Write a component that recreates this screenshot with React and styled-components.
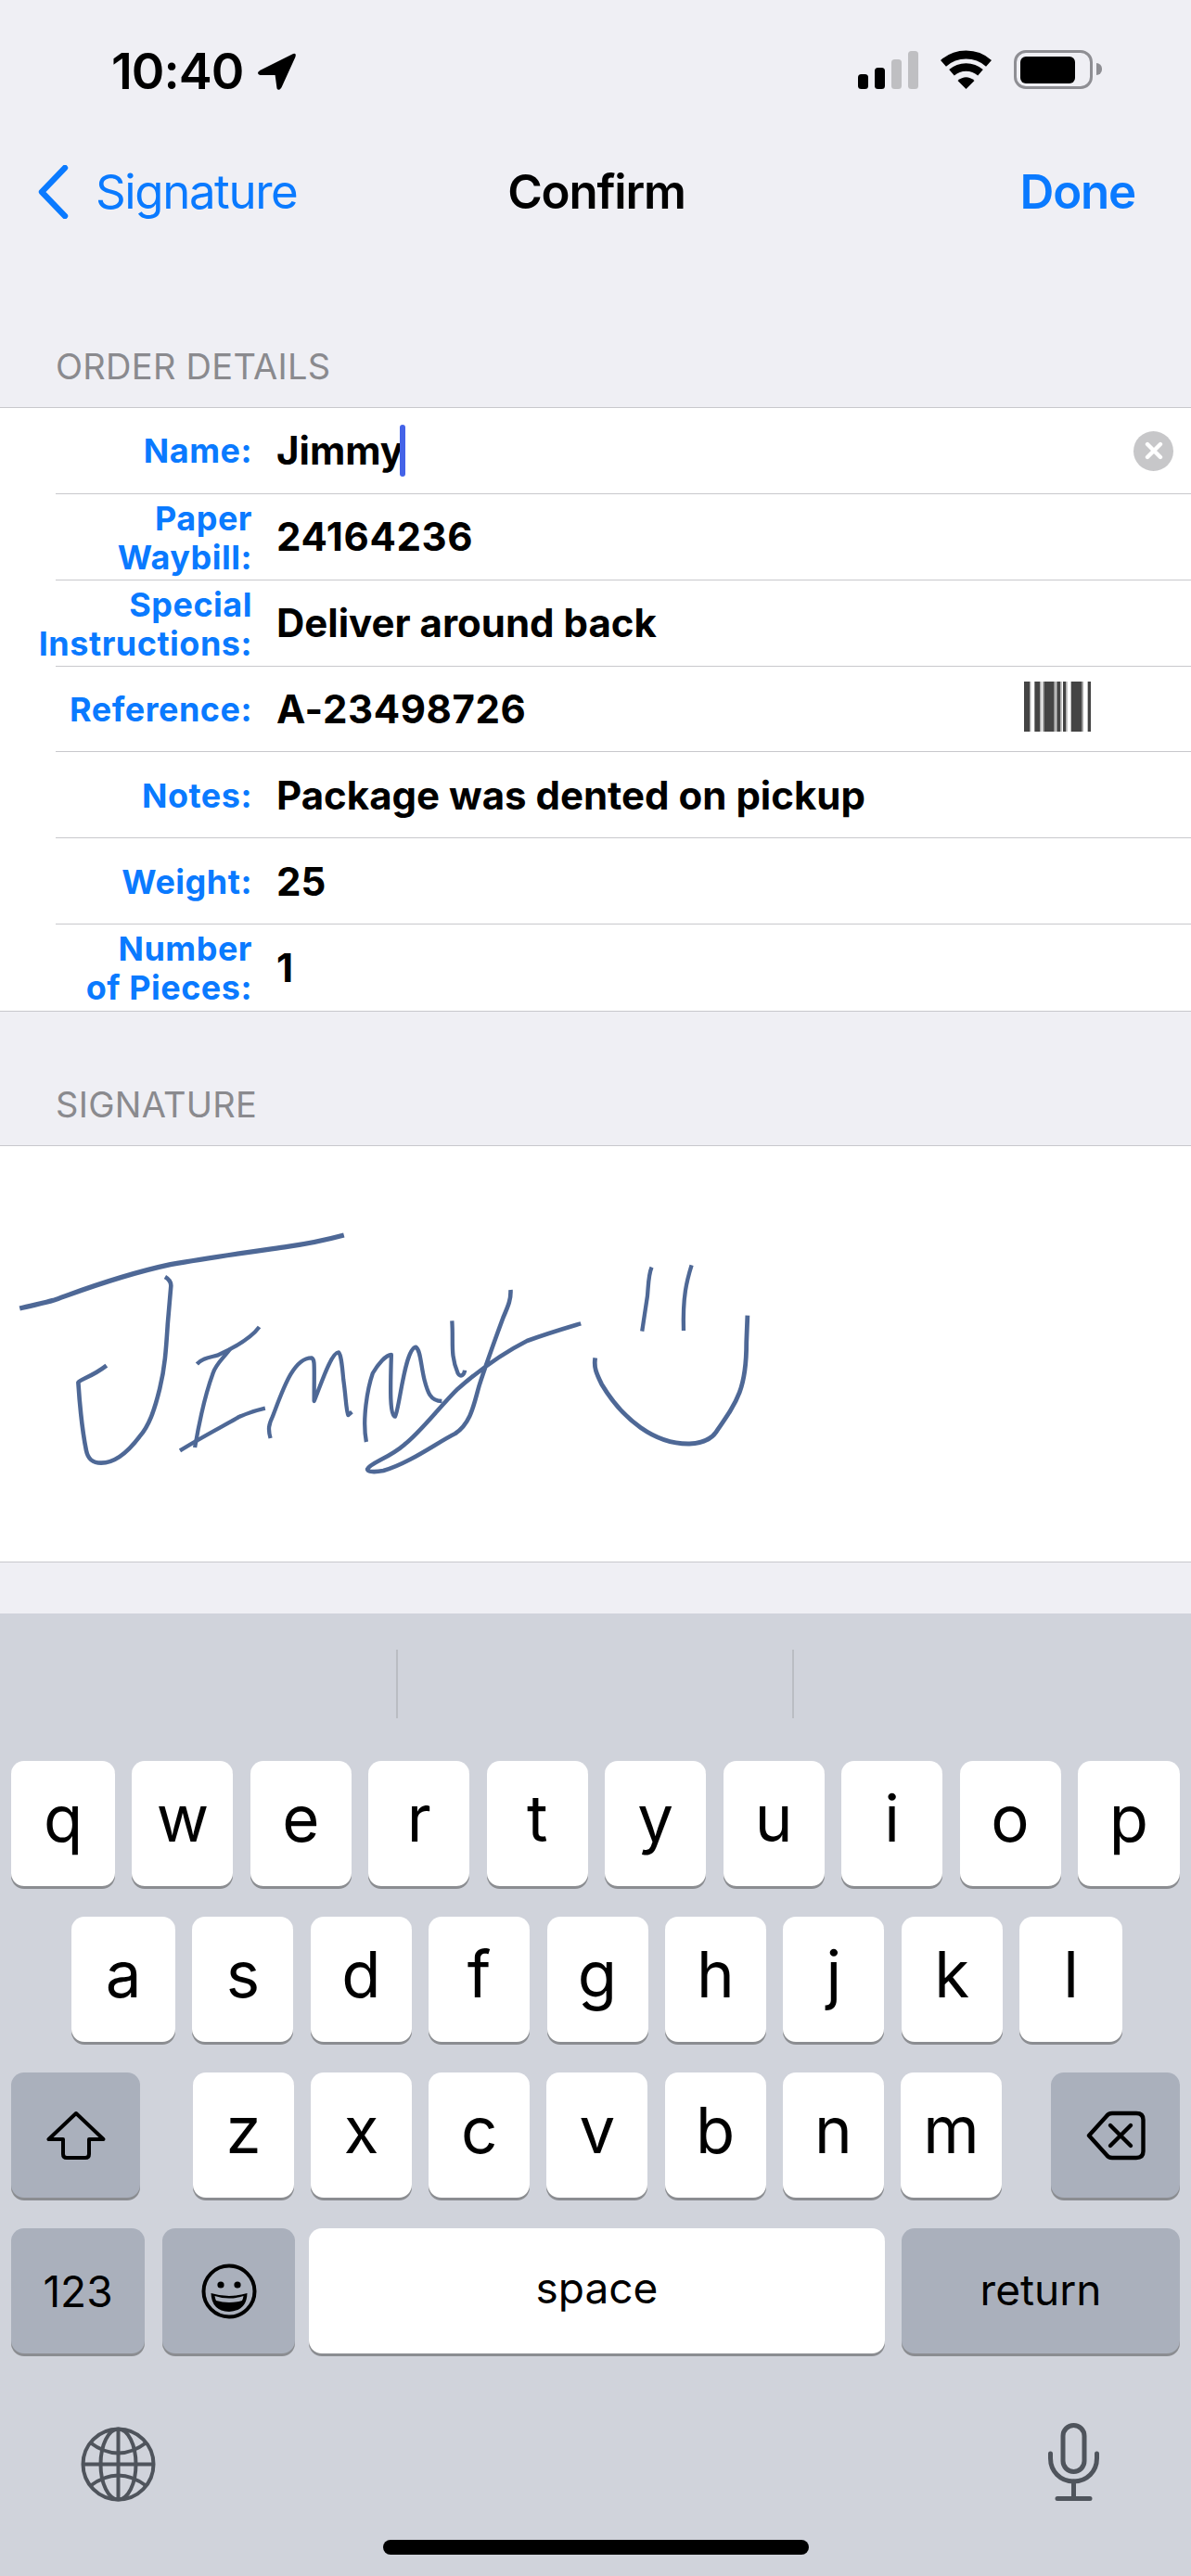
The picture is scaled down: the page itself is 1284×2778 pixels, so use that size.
import React from "react";
import styled, { createGlobalStyle } from "styled-components";

const Global = createGlobalStyle`
  html, body { margin: 0; padding: 0; background: #efeff4; }
  * { box-sizing: border-box; }
`;
const Page = styled.div`
  width: 1284px; height: 2778px; display: flex; flex-direction: column;
  background: #efeff4; overflow: hidden; color: #000;
  font-family: Inter, "Liberation Sans", sans-serif;
`;
const StatusBar = styled.div`
  height: 152px; display: flex; align-items: center; justify-content: space-between;
  padding: 0 97px 0 120px;
`;
const TimeGroup = styled.div`display: flex; align-items: center; gap: 15px; padding-top: 2px;`;
const Time = styled.span`font-size: 54px; font-weight: 600; letter-spacing: -1px; line-height: 60px;`;
const StatusIcons = styled.div`display: flex; align-items: flex-end; gap: 23px; height: 42px; margin-bottom: 2px;`;
const Signal = styled.div`display: flex; align-items: flex-end; gap: 7px;`;
const Bar = styled.i`
  display: block; width: 11px; height: ${p => p.$h}px; border-radius: 3.5px;
  background: ${p => (p.$dim ? "#bfbfc2" : "#000")};
`;
const Battery = styled.div`
  position: relative; width: 85px; height: 42px; border: 3.5px solid #8e8e93; border-radius: 13px;
  padding: 3.5px; margin-right: 9px;
  &::before { content: ""; display: block; width: 59px; height: 100%; background: #000; border-radius: 6px; }
  &::after { content: ""; position: absolute; right: -13px; top: 11px; width: 6px; height: 13px; background: #8e8e93; border-radius: 0 6px 6px 0; }
`;
const Nav = styled.div`
  height: 110px; display: grid; grid-template-columns: 1fr auto 1fr; align-items: center;
  padding: 0 41px; font-size: 51px; line-height: 60px;
`;
const Back = styled.div`display: flex; align-items: center; gap: 29px; color: #0a7aff; letter-spacing: -1.4px;`;
const Title = styled.div`font-weight: 600; letter-spacing: -1.2px; padding-left: 2px;`;
const Done = styled.div`justify-self: end; margin-right: 19px; color: #0a7aff; font-weight: 600; letter-spacing: -1.2px;`;
const SectionHead = styled.div`
  height: ${p => p.$h}px; display: flex; align-items: flex-end; padding: 0 0 21px 60px;
  font-size: 38px; line-height: 46px; color: #8a8a8e; letter-spacing: 0.28px;
`;
const Group = styled.div`
  background: #fff; border-top: 1px solid #c8c8cc; border-bottom: 1px solid #c8c8cc;
`;
const Row = styled.div`
  position: relative; height: 92.86px; display: grid; grid-template-columns: 272px 1fr; column-gap: 26px;
  align-items: center; padding-right: 19px;
  &:not(:last-child)::after { content: ""; position: absolute; left: 60px; right: 0; bottom: 0; height: 1px; background: #c8c8cc; }
`;
const Label = styled.div`
  text-align: right; color: #0a7aff; font-size: 36px; font-weight: 700; line-height: 42px; letter-spacing: 0.5px;
  padding-top: ${p => (p.$two ? "1px" : "0")};
`;
const ValueCell = styled.div`display: flex; align-items: center; justify-content: space-between;`;
const Value = styled.div`
  display: flex; align-items: center; font-size: 42px; font-weight: 700; line-height: 50px;
  letter-spacing: ${p => (p.$digits ? "0.6px" : "0")};
`;
const Caret = styled.i`
  display: block; width: 6px; height: 56px; margin-left: -4px; border-radius: 3px; background: #4463e8;
`;
const Clear = styled.div`
  width: 43px; height: 43px; border-radius: 50%; background: #c7c7c9;
  display: flex; align-items: center; justify-content: center;
`;
const BarcodeWrap = styled.div`display: flex; margin: -6px 89px 0 0;`;
const SignaturePanel = styled(Group)`height: 450px;`;
const Keyboard = styled.div`
  margin-top: auto; height: 1038px; display: flex; flex-direction: column; background: #d0d3db;
`;
const Suggestions = styled.div`
  height: 159px; padding: 39px 0 46px; display: grid; grid-template-columns: 427px 427px 1fr;
`;
const Suggestion = styled.div`
  & + & { border-left: 2px solid #babdc3; }
`;
const KeyRows = styled.div`display: flex; flex-direction: column; gap: 33px;`;
const KeyRow = styled.div`
  display: flex; justify-content: ${p => p.$start ? "flex-start" : "space-between"}; padding: ${p => p.$pad};
`;
const Key = styled.div`
  flex: 0 0 ${p => p.$w || 109}px; height: 135px; border-radius: 14px; margin-left: ${p => p.$ml || 0}px;
  background: ${p => (p.$mod ? "#aab0bc" : "#fff")}; box-shadow: 0 3px 0 #8b8d91;
  display: flex; align-items: center; justify-content: center;
  font-size: ${p => (p.$small ? "46px" : "69px")}; line-height: 1;
  padding-bottom: ${p => (p.$up !== undefined ? p.$up : p.$small ? 0 : 10)}px;
`;
const LetterGroup = styled.div`display: flex; width: 872px; margin-left: 4px; justify-content: space-between;`;
const Accessory = styled.div`
  margin-top: 79px; height: 81px; display: flex; align-items: flex-end; justify-content: space-between;
  padding: 0 99px 0 87px;
`;
const HomeBar = styled.div`
  width: 459px; height: 16px; margin: 41px auto 0; border-radius: 8px; background: #000;
`;

const ArrowIcon = () => (
  <svg width="43" height="41" viewBox="0 0 42 41">
    <path d="M39 2 L3 20 Q0 22 3 23 L20 23 L22 38 Q23 40 25 37 L40 4 Q41 1 39 2Z" fill="#000" stroke="#000" strokeWidth="2" strokeLinejoin="round" />
  </svg>
);
const WifiIcon = () => (
  <svg width="57" height="42" viewBox="0 0 57 42">
    <path d="M28.5 42 L19.5 33 Q28.5 25.5 37.5 33 Z" fill="#000" />
    <path d="M13 24.3 A23.5 23.5 0 0 1 44 24.3" fill="none" stroke="#000" strokeWidth="8.5" />
    <path d="M4 14.3 A37 37 0 0 1 53 14.3" fill="none" stroke="#000" strokeWidth="9" />
  </svg>
);
const Chevron = () => (
  <svg width="33" height="58" viewBox="0 0 33 58">
    <path d="M29 3 L4 29 L29 55" fill="none" stroke="#0a7aff" strokeWidth="6.4" strokeLinecap="round" strokeLinejoin="round" />
  </svg>
);
const ClearX = () => (
  <svg width="20" height="20" viewBox="0 0 20 20">
    <path d="M3 3 L17 17 M17 3 L3 17" stroke="#fff" strokeWidth="4.4" strokeLinecap="round" />
  </svg>
);
const Barcode = () => (
  <svg width="72" height="54" viewBox="0 0 216 162">
    {[[0,18],[34,18],[64,34],[106,12],[126,10],[152,36],[206,10]].map(([x,w]) => (
      <rect key={x} x={x} y="0" width={w} height="162" fill="#444" />
    ))}
    {[[18,4],[52,4],[60,4],[98,6],[118,4],[136,4],[188,4]].map(([x,w]) => (
      <rect key={x} x={x} y="0" width={w} height="162" fill="#aaa" />
    ))}
  </svg>
);
const ShiftIcon = () => (
  <svg width="64" height="54" viewBox="0 0 64 54">
    <path d="M32 3 L2.5 31 L18 31 L18 47 Q18 51 22 51 L42 51 Q46 51 46 47 L46 31 L61.5 31 Z" fill="none" stroke="#000" strokeWidth="4" strokeLinejoin="round" />
  </svg>
);
const DeleteIcon = () => (
  <svg width="64" height="54" viewBox="0 0 64 54">
    <path d="M3 27 L22 6 Q24 3 28 3 L54 3 Q61.5 3 61.5 10 L61.5 44 Q61.5 51 54 51 L28 51 Q24 51 22 48 Z" fill="none" stroke="#000" strokeWidth="4.4" strokeLinejoin="round" />
    <path d="M26 16 L48 38 M48 16 L26 38" stroke="#000" strokeWidth="4.4" strokeLinecap="round" />
  </svg>
);
const EmojiIcon = () => (
  <svg width="60" height="60" viewBox="0 0 60 60">
    <circle cx="30" cy="30" r="27.5" fill="none" stroke="#000" strokeWidth="4" />
    <circle cx="21" cy="23" r="3.6" fill="#000" />
    <circle cx="39" cy="23" r="3.6" fill="#000" />
    <path d="M10.5 32 Q30 38 49.5 32 Q49 51 30 52 Q11 51 10.5 32Z" fill="#000" />
    <path d="M14.5 35 Q30 40 45.5 35 Q45 38 44 40 Q30 44 16 40 Q15 38 14.5 35Z" fill="#aab0bc" />
  </svg>
);
const GlobeIcon = () => (
  <svg width="81" height="81" viewBox="0 0 81 81" fill="none" stroke="#4f545c" strokeWidth="4">
    <circle cx="40.5" cy="40.5" r="38" />
    <ellipse cx="40.5" cy="40.5" rx="19" ry="38" />
    <path d="M40.5 2.5 V78.5 M2.5 40.5 H78.5" />
    <path d="M10 17 Q40.5 40 71 17 M10 64 Q40.5 41 71 64" />
  </svg>
);
const MicIcon = () => (
  <svg width="55" height="85" viewBox="0 0 55 85" fill="none" stroke="#4f545c" strokeWidth="5" strokeLinecap="round">
    <rect x="16" y="2.5" width="23" height="50" rx="11.5" />
    <path d="M2.5 33 V38 C2.5 52 13 63 27.5 63 C42 63 52.5 52 52.5 38 V33" />
    <path d="M27.5 63 V81 M10 81.5 H45" />
  </svg>
);
const Signature = () => (
  <svg width="900" height="448" viewBox="0 165 1568 1344" preserveAspectRatio="none" fill="none" stroke="#4e6896" strokeLinecap="butt" strokeLinejoin="round">
    {[
      ["M37 690 C60 680 85 672 100 664 C140 640 220 585 320 548 C400 524 480 505 540 490 C590 478 620 465 646 453", 5.2],
      ["M310 588 C318 596 322 605 321 620 L315 740 C312 820 310 880 300 950 C290 1020 280 1070 262 1105 C240 1155 215 1190 190 1190 C172 1190 165 1175 162 1150 C155 1090 150 1010 147 930 C150 918 170 915 200 875", 4.6],
      ["M370 870 C380 850 395 848 408 842 C430 825 470 790 487 750", 4.3],
      ["M432 822 C420 850 405 870 400 900 C385 970 375 1050 366 1140", 4.3],
      ["M338 1150 C380 1105 420 1070 450 1040 C470 1025 485 1018 498 1013", 4.3],
      ["M508 1110 C503 1080 505 1065 512 1040 C530 960 550 850 585 850 C592 855 590 870 590 990 C600 950 622 830 636 832 C640 840 642 860 645 920 C650 980 650 1020 654 1035 L661 1025", 4.3],
      ["M688 1122 C680 1050 690 950 700 900 C710 870 725 840 735 840 C733 950 732 1040 742 1040 C750 1020 760 820 781 815 C790 825 790 870 797 920 C803 960 808 990 830 990", 4.3],
      ["M849 730 C852 800 845 840 860 900 C865 915 872 905 873 890", 4.3],
      ["M959 630 C960 660 955 680 945 720 C930 790 915 860 900 940 C890 1000 885 1060 855 1095 C820 1125 770 1190 720 1215 C705 1220 690 1220 690 1210 C695 1190 730 1175 760 1130 C790 1090 830 1000 860 950 C900 890 950 830 990 795 C1030 770 1060 755 1091 739", 4.6],
      ["M1118 850 C1115 880 1120 900 1130 935 C1170 1050 1230 1130 1295 1128 C1320 1126 1335 1115 1345 1090 C1385 990 1402 950 1402 800 L1404 713", 4.8],
      ["M1224 557 C1218 580 1218 610 1216 650 L1206 764", 4.3],
      ["M1299 550 C1290 600 1282 650 1284 762", 4.3],
    ].map(([d, w]) => (
      <path key={d} d={d} strokeWidth={w} vectorEffect="non-scaling-stroke" />
    ))}
  </svg>
);

const rows = [
  { label: <>Name:</>, value: "Jimmy", caret: true, trailing: <Clear><ClearX /></Clear> },
  { label: <>Paper<br />Waybill:</>, two: true, digits: true, value: "24164236" },
  { label: <>Special<br />Instructions:</>, two: true, value: "Deliver around back" },
  { label: <>Reference:</>, digits: true, value: "A-23498726", trailing: <BarcodeWrap><Barcode /></BarcodeWrap> },
  { label: <>Notes:</>, value: "Package was dented on pickup" },
  { label: <>Weight:</>, value: "25" },
  { label: <>Number<br />of Pieces:</>, two: true, value: "1" },
];

const letterKeys = (s) => s.split("").map((k) => <Key key={k}>{k}</Key>);

export default function App() {
  return (
    <Page>
      <Global />
      <StatusBar>
        <TimeGroup><Time>10:40</Time><ArrowIcon /></TimeGroup>
        <StatusIcons>
          <Signal>
            <Bar $h={16} /><Bar $h={23} /><Bar $h={32} $dim /><Bar $h={41} $dim />
          </Signal>
          <WifiIcon />
          <Battery />
        </StatusIcons>
      </StatusBar>
      <Nav>
        <Back><Chevron /><span>Signature</span></Back>
        <Title>Confirm</Title>
        <Done>Done</Done>
      </Nav>
      <SectionHead $h={177}>ORDER DETAILS</SectionHead>
      <Group>
        {rows.map((r, i) => (
          <Row key={i}>
            <Label $two={r.two}>{r.label}</Label>
            <ValueCell>
              <Value $digits={r.digits}>{r.value}{r.caret && <Caret />}</Value>
              {r.trailing}
            </ValueCell>
          </Row>
        ))}
      </Group>
      <SectionHead $h={144}>SIGNATURE</SectionHead>
      <SignaturePanel><Signature /></SignaturePanel>
      <Keyboard>
        <Suggestions><Suggestion /><Suggestion /><Suggestion /></Suggestions>
        <KeyRows>
          <KeyRow $pad="0 12px">
            <Key $w={112}>q</Key>
            {letterKeys("wertyuio")}
            <Key $w={110}>p</Key>
          </KeyRow>
          <KeyRow $pad="0 74px 0 77px">
            <Key $w={112}>a</Key>
            {letterKeys("sdfghjk")}
            <Key $w={111}>l</Key>
          </KeyRow>
          <KeyRow $pad="0 12px">
            <Key $w={139} $mod $small><ShiftIcon /></Key>
            <LetterGroup>{letterKeys("zxcvbnm")}</LetterGroup>
            <Key $w={139} $mod $small><DeleteIcon /></Key>
          </KeyRow>
          <KeyRow $pad="0 12px" $start>
            <Key $w={144} $mod $small>123</Key>
            <Key $w={143} $ml={19} $mod $small><EmojiIcon /></Key>
            <Key $w={621} $ml={15} $small $up={7}>space</Key>
            <Key $w={300} $ml={18} $mod $small $up={4}>return</Key>
          </KeyRow>
        </KeyRows>
        <Accessory><GlobeIcon /><MicIcon /></Accessory>
        <HomeBar />
      </Keyboard>
    </Page>
  );
}
